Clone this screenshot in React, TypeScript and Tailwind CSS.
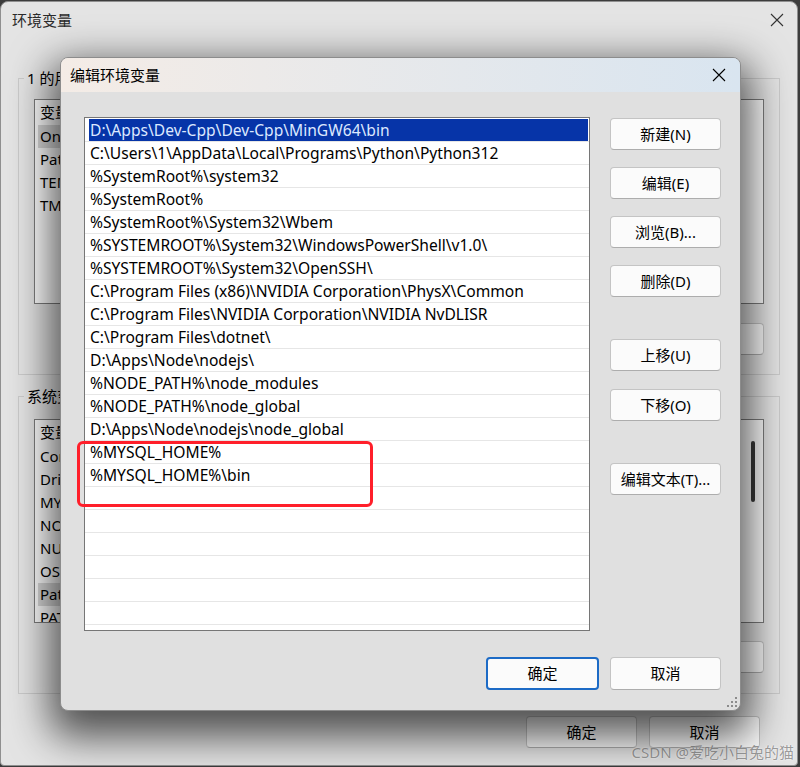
const paths = [
  "D:\\Apps\\Dev-Cpp\\Dev-Cpp\\MinGW64\\bin",
  "C:\\Users\\1\\AppData\\Local\\Programs\\Python\\Python312",
  "%SystemRoot%\\system32",
  "%SystemRoot%",
  "%SystemRoot%\\System32\\Wbem",
  "%SYSTEMROOT%\\System32\\WindowsPowerShell\\v1.0\\",
  "%SYSTEMROOT%\\System32\\OpenSSH\\",
  "C:\\Program Files (x86)\\NVIDIA Corporation\\PhysX\\Common",
  "C:\\Program Files\\NVIDIA Corporation\\NVIDIA NvDLISR",
  "C:\\Program Files\\dotnet\\",
  "D:\\Apps\\Node\\nodejs\\",
  "%NODE_PATH%\\node_modules",
  "%NODE_PATH%\\node_global",
  "D:\\Apps\\Node\\nodejs\\node_global",
  "%MYSQL_HOME%",
  "%MYSQL_HOME%\\bin",
  "",
  "",
  "",
  "",
  "",
  "",
];

const userVars = ["OneDrive", "Path", "TEMP", "TMP"];
const sysVars = ["ComSpec", "DriverData", "MYSQL_HOME", "NODE_PATH", "NUMBER_OF_PROCESSORS", "OS", "Path", "PATHEXT"];

function CloseIcon() {
  return (
    <svg width="14" height="14" viewBox="0 0 14 14" fill="none" stroke="currentColor" strokeWidth="1.1">
      <path d="M1 1l12 12M13 1L1 13" />
    </svg>
  );
}

function Btn({ label, primary, className = "" }: { label: string; primary?: boolean; className?: string }) {
  return (
    <div
      className={
        "w-[111px] h-[32px] flex items-center justify-center rounded-[4px] bg-[#fbfbfb] text-[15px] text-black " +
        (primary ? "border-2 border-[#1d6bc6] " : "border border-[#c4c4c4] border-b-[#adadad] ") +
        className
      }
    >
      {label}
    </div>
  );
}

function VarList({ rows, selected }: { rows: string[]; selected: number }) {
  return (
    <div className="h-full bg-white border border-[#7d7d7d] overflow-hidden">
      <div className="flex h-[25px] items-center text-[15px]">
        <span className="w-[180px] pl-[5px]">变量</span>
      </div>
      {rows.map((k, i) => (
        <div key={k + i} className="flex h-[23px] items-center text-[15px] ml-[3px]">
          <span className={"w-[160px] pl-[2px] whitespace-nowrap " + (i === selected ? "bg-[#d9d9d9]" : "")}>{k}</span>
        </div>
      ))}
    </div>
  );
}

function Grip() {
  const dots = [
    [8, 0],
    [4, 4],
    [8, 4],
    [0, 8],
    [4, 8],
    [8, 8],
  ];
  return (
    <svg width="10" height="10" viewBox="0 0 10 10">
      {dots.map(([x, y], i) => (
        <rect key={i} x={x} y={y} width="2" height="2" fill="#8c8c8c" />
      ))}
    </svg>
  );
}

export default function App() {
  return (
    <div className="w-[800px] h-[767px] overflow-hidden bg-[#3c3c3c] pt-[1px] font-['Noto_Sans','Noto_Sans_CJK_SC',sans-serif] text-black">
      {/* back window: 环境变量 */}
      <div className="relative w-[798px] h-[765px] rounded-t-[8px] rounded-b-[4px] border border-[#8f8f8f] bg-[#e4e4e4] flex flex-col">
        <div className="h-[36px] flex items-center justify-between pl-[11px] pr-[13px] text-[15px] text-[#2a2a2a]">
          <span>环境变量</span>
          <span className="text-[#333]">
            <CloseIcon />
          </span>
        </div>

        <fieldset className="mt-[30px] mx-[17px] border border-[#cbcbcb] px-[15px] pb-[19px]">
          <legend className="ml-[-10px] px-[3px] text-[15px] leading-[20px]">1 的用户变量(U)</legend>
          <div className="h-[205px] mt-[11px]">
            <VarList rows={userVars} selected={0} />
          </div>
          <div className="mt-[19px] flex justify-end gap-[11px]">
            <Btn label="新建(N)..." />
            <Btn label="编辑(E)..." />
            <Btn label="删除(D)" />
          </div>
        </fieldset>

        <fieldset className="mt-[11px] mx-[17px] border border-[#cbcbcb] px-[15px] pb-[20px]">
          <legend className="ml-[-10px] px-[3px] text-[15px] leading-[20px]">系统变量(S)</legend>
          <div className="relative h-[204px] mt-[13px]">
            <VarList rows={sysVars} selected={6} />
            <div className="absolute right-[9px] top-[22px] w-[4px] h-[61px] rounded-full bg-[#3a3a3a]" />
          </div>
          <div className="mt-[18px] flex justify-end gap-[11px]">
            <Btn label="新建(W)..." />
            <Btn label="编辑(I)..." />
            <Btn label="删除(L)" />
          </div>
        </fieldset>

        <div className="mt-[22px] pr-[37px] flex justify-end gap-[12px]">
          <Btn label="确定" className="w-[110px]" />
          <Btn label="取消" className="w-[110px]" />
        </div>

        <span className="absolute right-[3px] bottom-[2px] text-[15px] text-[#9c9c9c] [text-shadow:0_0_2px_#ffffff,0_0_1px_#ffffff]">
          CSDN @爱吃小白兔的猫
        </span>

        {/* front dialog: 编辑环境变量 */}
        <div className="absolute left-[59px] top-[55px] w-[681px] h-[654px] rounded-[8px] border border-[#8c8c8c] bg-[#e0e0e0] shadow-[0_16px_40px_10px_rgba(0,0,0,0.65)] flex flex-col overflow-hidden">
          <div className="h-[35px] flex items-center justify-between pl-[9px] pr-[14px] bg-linear-to-r from-[#f4ece6] to-[#d9e5f0] text-[15px]">
            <span>编辑环境变量</span>
            <CloseIcon />
          </div>

          <div className="flex-1 flex flex-col pt-[25px] pl-[23px] pr-[19px] pb-[20px]">
            <div className="flex">
              <div className="relative w-[507px] h-[514px] border border-[#767676] bg-white">
                <div className="pt-[1px] h-full overflow-hidden">
                  {paths.map((p, i) => (
                    <div key={i} className="h-[23px] border-b border-[#e6e6e6] flex">
                      <div
                        className={
                          "flex-1 flex items-center pt-[2px] whitespace-nowrap text-[15.6px] " +
                          (i === 0 ? "ml-[4px] mr-[1px] pl-[1px] bg-[#0634a8] text-[#dce8ff]" : "pl-[5px]")
                        }
                      >
                        {p}
                      </div>
                    </div>
                  ))}
                </div>
                <div className="absolute left-[-8px] top-[323px] w-[296px] h-[66px] rounded-[6px] border-[3px] border-[#ff1f2a]" />
              </div>

              <div className="ml-[20px] flex flex-col">
                <Btn label="新建(N)" className="mt-[1px]" />
                <Btn label="编辑(E)" className="mt-[17px]" />
                <Btn label="浏览(B)..." className="mt-[17px]" />
                <Btn label="删除(D)" className="mt-[17px]" />
                <Btn label="上移(U)" className="mt-[42px]" />
                <Btn label="下移(O)" className="mt-[18px]" />
                <Btn label="编辑文本(T)..." className="mt-[42px]" />
              </div>
            </div>

            <div className="mt-[26px] flex justify-end gap-[11px]">
              <Btn label="确定" primary className="h-[33px] w-[113px]" />
              <Btn label="取消" className="h-[33px]" />
            </div>
          </div>

          <div className="absolute right-[3px] bottom-[3px]">
            <Grip />
          </div>
        </div>
      </div>
    </div>
  );
}
